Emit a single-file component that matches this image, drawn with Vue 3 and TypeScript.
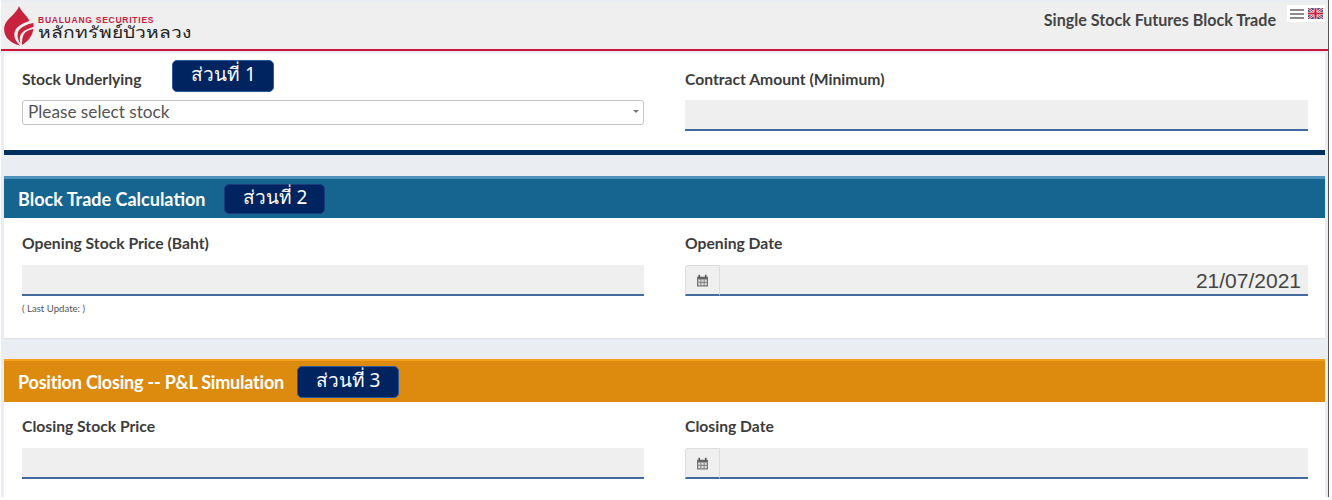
<script setup lang="ts">
const part = 'ส่วนที่'
</script>

<template>
  <div class="page">
    <header class="topbar">
      <div class="logo">
        <svg class="mark" viewBox="0 0 30 40" width="30" height="40">
          <path d="M15 0C13 6 7 10 3 15C-2 21 0 30 5 34C8 37 12 38.500 16 39.500C11 35 9 30 11 25C13 20 19 17 25.500 15C23 9 17 6 15 0Z" fill="#c8223f" />
          <path d="M29.500 17C23 18 17 21 14.500 25C12.500 29 14 34 16.500 38C15 32 16 28 20 25C23 23 26 22 29.500 21Z" fill="#c8223f" />
          <path d="M29.500 23C25 24 22 25 20 28C18 31 18 35 18 39C23 36 28 31 29.500 23Z" fill="#c8223f" />
        </svg>
        <div class="logo-text">
          <span class="logo-en">BUALUANG SECURITIES</span>
          <span class="logo-th">หลักทรัพย์บัวหลวง</span>
        </div>
      </div>
      <div class="top-right">
        <span class="app-title">Single Stock Futures Block Trade</span>
        <div class="top-icons">
          <svg width="14" height="10" viewBox="0 0 14 10"><path d="M0 1h14M0 5h14M0 9h14" stroke="#8a8a8a" stroke-width="2" /></svg>
          <svg width="15" height="11" viewBox="0 0 14 10">
            <rect width="14" height="10" fill="#2b3f80" />
            <path d="M0 0L14 10M14 0L0 10" stroke="#fff" stroke-width="2.200" />
            <path d="M0 0L14 10M14 0L0 10" stroke="#c8223f" stroke-width="1" />
            <path d="M7 0V10M0 5H14" stroke="#fff" stroke-width="3.400" />
            <path d="M7 0V10M0 5H14" stroke="#c8223f" stroke-width="2" />
          </svg>
        </div>
      </div>
    </header>

    <main class="content">
      <section class="panel first">
        <div class="grid">
          <div class="field">
            <div class="label-row">
              <label>Stock Underlying</label>
              <span class="tag tag-one">{{ part }} 1</span>
            </div>
            <div class="select">Please select stock<span class="caret"></span></div>
          </div>
          <div class="field">
            <div class="label-row"><label>Contract Amount (Minimum)</label></div>
            <div class="input amount"></div>
          </div>
        </div>
      </section>
      <div class="rule"></div>

      <section class="panel card">
        <div class="card-head blue">
          <h2>Block Trade Calculation</h2>
          <span class="tag">{{ part }} 2</span>
        </div>
        <div class="grid body">
          <div class="field">
            <label>Opening Stock Price (Baht)</label>
            <div class="input"></div>
            <small>( Last Update: )</small>
          </div>
          <div class="field">
            <label>Opening Date</label>
            <div class="date">
              <span class="addon">
                <svg width="13" height="13" viewBox="0 0 12 12"><path d="M1 2.500h10v9H1z" fill="#666" /><path d="M3 .8v2.400M9 .8v2.400" stroke="#555" stroke-width="1.400" /><path d="M2 5h8v5.500H2z" fill="#ddd" /><path d="M4.500 5v5.500M7.500 5v5.500M2 7.700h8" stroke="#666" stroke-width=".7" /></svg>
              </span>
              <div class="input value">21/07/2021</div>
            </div>
          </div>
        </div>
      </section>

      <section class="panel card last">
        <div class="card-head orange">
          <h2>Position Closing -- P&amp;L Simulation</h2>
          <span class="tag">{{ part }} 3</span>
        </div>
        <div class="grid body">
          <div class="field">
            <label>Closing Stock Price</label>
            <div class="input"></div>
          </div>
          <div class="field">
            <label>Closing Date</label>
            <div class="date">
              <span class="addon">
                <svg width="13" height="13" viewBox="0 0 12 12"><path d="M1 2.500h10v9H1z" fill="#666" /><path d="M3 .8v2.400M9 .8v2.400" stroke="#555" stroke-width="1.400" /><path d="M2 5h8v5.500H2z" fill="#ddd" /><path d="M4.500 5v5.500M7.500 5v5.500M2 7.700h8" stroke="#666" stroke-width=".7" /></svg>
              </span>
              <div class="input value"></div>
            </div>
          </div>
        </div>
      </section>
    </main>
  </div>
</template>

<style>
html, body { margin: 0; background: #fff; overflow: hidden; }
</style>

<style scoped>
.page {
  width: 1327px;
  height: 495px;
  margin-left: 1px;
  padding-top: 2px;
  overflow: hidden;
  background: #eaeef3;
  border-right: 1px solid #555;
  font-family: Lato, "Noto Sans", sans-serif;
  color: #333;
}
.topbar {
  height: 47px;
  background: #efefef;
  border-bottom: 2px solid #c8163f;
  display: flex;
  justify-content: space-between;
}
.logo { display: flex; align-items: flex-start; padding: 4px 0 0 3px; gap: 4px; }
.logo-text { display: flex; flex-direction: column; padding-top: 10px; }
.logo-en {
  font: bold 8.500px/9px "Liberation Sans", sans-serif;
  letter-spacing: .75px;
  color: #c8223f;
}
.logo-th {
  margin-top: -1px;
  font: 16px/16px "Noto Sans", "Liberation Sans", sans-serif;
  color: #222;
  transform: scaleX(1.2);
  transform-origin: left center;
}
.top-right { display: flex; align-items: flex-start; }
.app-title { font-size: 16.100px; font-weight: 700; line-height: 20px; margin-top: 8px; color: #444; }
.top-icons {
  display: flex;
  gap: 4px;
  background: #fff;
  margin: 3px 3px 0 11px;
  padding: 0 2px 0 3px;
  width: 38px;
  height: 17px;
  box-sizing: border-box;
  align-items: center;
}
.content { padding: 0 3px; }
.panel { background: #fff; }
.first { height: 99px; box-sizing: border-box; border-top: 2px solid #eaeef3; }
.grid {
  display: grid;
  grid-template-columns: 622px 623px;
  column-gap: 41px;
  padding: 0 17px 0 18px;
}
.label-row { display: flex; align-items: flex-start; min-height: 32px; padding-top: 7px; margin-bottom: 8px; }
.label-row label { margin-top: 9px; }
.field label { font-size: 15.700px; font-weight: 700; line-height: 20px; color: #3c3c3c; }
.tag {
  display: inline-block;
  width: 102px;
  height: 32px;
  box-sizing: border-box;
  background: #00245f;
  border: 1px solid #2e5a99;
  border-radius: 5px;
  color: #fff;
  font: 19px/27px "Noto Sans", "Liberation Sans", sans-serif;
  text-align: center;
}
.tag-one { margin-left: 31px; }
.select {
  height: 25px;
  box-sizing: border-box;
  border: 1px solid #c4c4c4;
  border-radius: 3px;
  padding-left: 5px;
  font-size: 17.200px;
  line-height: 21px;
  color: #555;
  position: relative;
}
.caret {
  position: absolute;
  right: 4px;
  top: 9px;
  border: 3px solid transparent;
  border-top: 3px solid #777;
  border-bottom: 0;
}
.input {
  height: 31px;
  box-sizing: border-box;
  background: #efefef;
  border-bottom: 2px solid #436a9c;
}
.amount { margin-top: 1px; }
.rule { height: 5px; background: #00305f; }
.card { margin-top: 21px; height: 162px; box-shadow: 0 1px 1px #dfe2e6; }
.last { height: 138px; box-shadow: none; }
.card-head {
  height: 42px;
  box-sizing: border-box;
  display: flex;
  align-items: center;
  padding: 0 14px;
  color: #fff;
}
.card-head h2 { margin: 0; font-size: 18px; font-weight: 700; color: #fff; }
.blue { background: #166490; border-top: 3px solid #4d93bd; }
.orange { background: #dc8b0e; border-top: 2px solid #f5a01c; height: 43px; }
.orange h2 { letter-spacing: -.2px; }
.blue .tag { margin-left: 19px; width: 101px; height: 30px; border-color: #1b3d7d; line-height: 25px; }
.orange .tag { margin-left: 13px; }
.body .field label { display: block; margin: 15px 0 12px; }
.last .body .field label { margin-top: 14px; }
small { display: block; font-size: 9.600px; margin-top: 7px; color: #555; }
.date { display: flex; }
.addon {
  width: 35px;
  height: 31px;
  box-sizing: border-box;
  background: #efefef;
  border: 1px solid #ddd;
  border-bottom: 2px solid #436a9c;
  border-radius: 3px 0 0 0;
  display: flex;
  align-items: center;
  justify-content: center;
}
.value {
  flex: 1;
  text-align: right;
  padding-right: 7px;
  font: 21px/31px "Liberation Sans", sans-serif;
  color: #444;
}
</style>
